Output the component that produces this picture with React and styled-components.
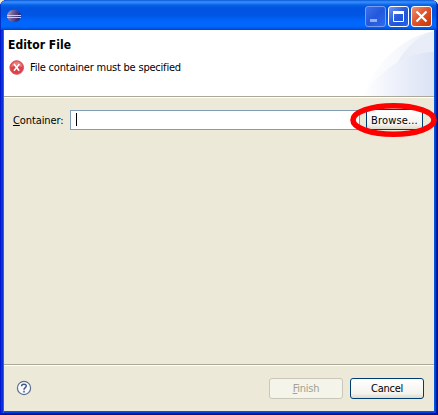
import React from 'react';
import styled, { createGlobalStyle, css } from 'styled-components';

const Global = createGlobalStyle`
  * { box-sizing: border-box; }
  body { margin: 0; background: #ece9d8; overflow: hidden; }
`;

const Window = styled.div`
  position: relative;
  width: 438px;
  height: 415px;
  display: flex;
  flex-direction: column;
  border-radius: 7px 7px 0 0;
  overflow: hidden;
  padding: 0 4px 4px;
  background: #0831d9;
  box-shadow: inset 1px 0 #0019cf, inset -1px -1px #00138c, inset -2px -2px #001ea0,
    inset 3px 0 #0831d9, inset 4px 0 #166aee, inset -3px -3px #0441d8, inset -4px -4px #0855dd;
  font: 11px/13px 'DejaVu Sans Condensed', 'DejaVu Sans', sans-serif;
  font-stretch: condensed;
  color: #000;
`;

const TitleBar = styled.div`
  height: 30px;
  flex: none;
  margin: 0 -4px;
  padding: 6px 6px 0 7px;
  display: flex;
  gap: 2px;
  background: linear-gradient(#0758d8 0, #3b91ff 2px, #2a80f4 3px, #0562e8 5px, #0054e0 8px,
    #0055e5 15px, #0065fb 21px, #0068ff 26px, #005bed 28px, #0042c8 30px);
  box-shadow: inset 1px 0 #0030c5, inset -1px 0 #001ea0, inset -2px 0 #003bc4;
`;

const AppIcon = styled.svg`
  width: 15px;
  height: 15px;
  margin: 3px auto 0 0;
`;

const tones = {
  dim: css`
    background: linear-gradient(135deg, #3d70e8, #2258dc 50%, #2f6cec);
    border-color: #7b9bf0;
  `,
  blue: css`
    background: linear-gradient(135deg, #7397f2, #2b5ddd 45%, #1d55dc 70%, #2868f0);
    border-color: #fff;
  `,
  red: css`
    background: linear-gradient(135deg, #ee9276, #df5630 45%, #d84012 75%, #c43b10);
    border-color: #fff;
  `,
};

const CaptionButton = styled.button`
  width: 21px;
  height: 21px;
  padding: 0;
  border: 1px solid;
  border-radius: 3px;
  display: grid;
  place-items: center;
  ${({ $tone }) => tones[$tone]}
  svg { width: 19px; height: 19px; display: block; }
`;

const Header = styled.header`
  height: 66px;
  flex: none;
  display: flex;
  justify-content: space-between;
  background: #fff;
`;

const HeaderText = styled.div`
  padding: 8px 0 0 4px;
`;

const Heading = styled.h1`
  margin: 0;
  font-size: 12px;
  line-height: 15px;
  font-weight: bold;
  letter-spacing: 0.05px;
  white-space: nowrap;
`;

const Message = styled.div`
  display: flex;
  align-items: center;
  gap: 6px;
  margin-top: 6px;
  padding-left: 1px;
  height: 16px;
  letter-spacing: -0.21px;
  white-space: nowrap;
  svg { width: 15px; height: 15px; }
`;

const Swoosh = styled.svg`
  width: 74px;
  height: 66px;
`;

const Separator = styled.div`
  height: 2px;
  flex: none;
  background: linear-gradient(#aca899 50%, #fff 50%);
`;

const Body = styled.main`
  flex: 1;
  display: flex;
  align-items: flex-start;
  padding: 11px 11px 0 9px;
  background: #ece9d8;
`;

const Label = styled.label`
  width: 57px;
  flex: none;
  line-height: 21px;
  padding-top: 1px;
  letter-spacing: -0.1px;
`;

const Field = styled.div`
  flex: 1;
  height: 20px;
  margin: 1px 6px 0 0;
  padding: 2px 5px;
  border: 1px solid #7f9db9;
  background: #fff;
`;

const Caret = styled.span`
  display: block;
  width: 1px;
  height: 13px;
  background: #000;
`;

const Button = styled.button`
  width: 74px;
  height: 21px;
  padding: 0 0 1px;
  border: 1px solid #003c74;
  border-radius: 3px;
  background: linear-gradient(#fff, #f4f3ee 75%, #dedacb);
  font: inherit;
  letter-spacing: -0.25px;
  color: #000;
  &:disabled {
    color: #a1a192;
    border-color: #c9c7ba;
    background: #f5f4ea;
  }
`;

const BrowseButton = styled(Button)`
  width: 57px;
  padding: 1px 0 0;
  letter-spacing: 0.15px;
`;

const Footer = styled.footer`
  height: 45px;
  flex: none;
  display: flex;
  align-items: flex-start;
  gap: 7px;
  padding: 12px 10px 0 12px;
  background: #ece9d8;
`;

const HelpIcon = styled.svg`
  width: 16px;
  height: 16px;
  margin: 2px auto 0 0;
`;

const Highlight = styled.svg`
  position: absolute;
  left: 348px;
  top: 101px;
  width: 90px;
  height: 38px;
  pointer-events: none;
`;

const Accel = styled.span`
  text-decoration: underline;
  text-underline-offset: 1px;
  text-decoration-thickness: 1px;
`;

export default function App() {
  return (
    <>
      <Global />
      <Window>
        <TitleBar>
          <AppIcon viewBox="0 0 15 15">
            <defs>
              <linearGradient id="orb" x2="1" y2=".25">
                <stop offset="0" stopColor="#c3a4c0" />
                <stop offset=".45" stopColor="#6d6097" />
                <stop offset="1" stopColor="#29236f" />
              </linearGradient>
            </defs>
            <ellipse cx="7" cy="7" rx="6.8" ry="6.2" fill="url(#orb)" />
            <path d="M0 6.5h14M0 8.5h14" stroke="#c5cef2" />
          </AppIcon>
          <CaptionButton $tone="dim">
            <svg viewBox="0 0 19 19"><path d="M4 12h7v3H4z" fill="#9cacee" /></svg>
          </CaptionButton>
          <CaptionButton $tone="blue">
            <svg viewBox="0 0 19 19">
              <path d="M4.5 4.5h10v10h-10z" fill="none" stroke="#fff" />
              <path d="M4 4h11v3H4z" fill="#fff" />
            </svg>
          </CaptionButton>
          <CaptionButton $tone="red">
            <svg viewBox="0 0 19 19"><path d="M4.5 4.5l10 10m0-10l-10 10" stroke="#fff" strokeWidth="2.2" /></svg>
          </CaptionButton>
        </TitleBar>

        <Header>
          <HeaderText>
            <Heading>Editor File</Heading>
            <Message>
              <svg viewBox="0 0 15 15">
                <circle cx="7.7" cy="7.5" r="6.8" fill="#df414b" stroke="#d8545a" />
                <path d="M2.2 7A5.5 5.5 0 0 1 13.2 7Q7 5 2.2 7z" fill="#ec7b7d" />
                <path d="M5 4l5.2 6.8m.2-6.8l-5.4 6.8" stroke="#fff" strokeWidth="1.6" />
              </svg>
              File container must be specified
            </Message>
          </HeaderText>
          <Swoosh viewBox="0 0 74 66">
            <defs>
              <linearGradient id="far">
                <stop offset="0" stopColor="#fff" />
                <stop offset="1" stopColor="#edf1fa" />
              </linearGradient>
              <linearGradient id="near">
                <stop offset="0" stopColor="#fff" />
                <stop offset=".5" stopColor="#edf0fa" />
                <stop offset="1" stopColor="#dbe2f4" />
              </linearGradient>
            </defs>
            <path d="M2 66C14 36 40 7 74 1V66z" fill="url(#far)" />
            <path d="M35 37C43 21 56 6 74 1V40z" fill="#e8edf8" />
            <path d="M2 66C22 38 48 22 74 22V66z" fill="url(#near)" />
          </Swoosh>
        </Header>
        <Separator />

        <Body>
          <Label><Accel>C</Accel>ontainer:</Label>
          <Field><Caret /></Field>
          <BrowseButton>Browse...</BrowseButton>
        </Body>

        <Separator />
        <Footer>
          <HelpIcon viewBox="0 0 16 16">
            <circle cx="8" cy="8" r="6.6" fill="#f8faff" stroke="#5c708f" strokeWidth="1.2" />
            <path d="M5.6 6.2C5.6 3.5 10.3 3.5 10.3 6.1C10.3 7.7 8 7.7 8 9.7M8 10.8v1.8" fill="none" stroke="#405780" strokeWidth="1.5" />
          </HelpIcon>
          <Button disabled><Accel>F</Accel>inish</Button>
          <Button>Cancel</Button>
        </Footer>

        <Highlight viewBox="0 0 90 38">
          <ellipse cx="45.5" cy="19" rx="40.5" ry="14.2" fill="none" stroke="#f00" strokeWidth="5.6" />
        </Highlight>
      </Window>
    </>
  );
}
